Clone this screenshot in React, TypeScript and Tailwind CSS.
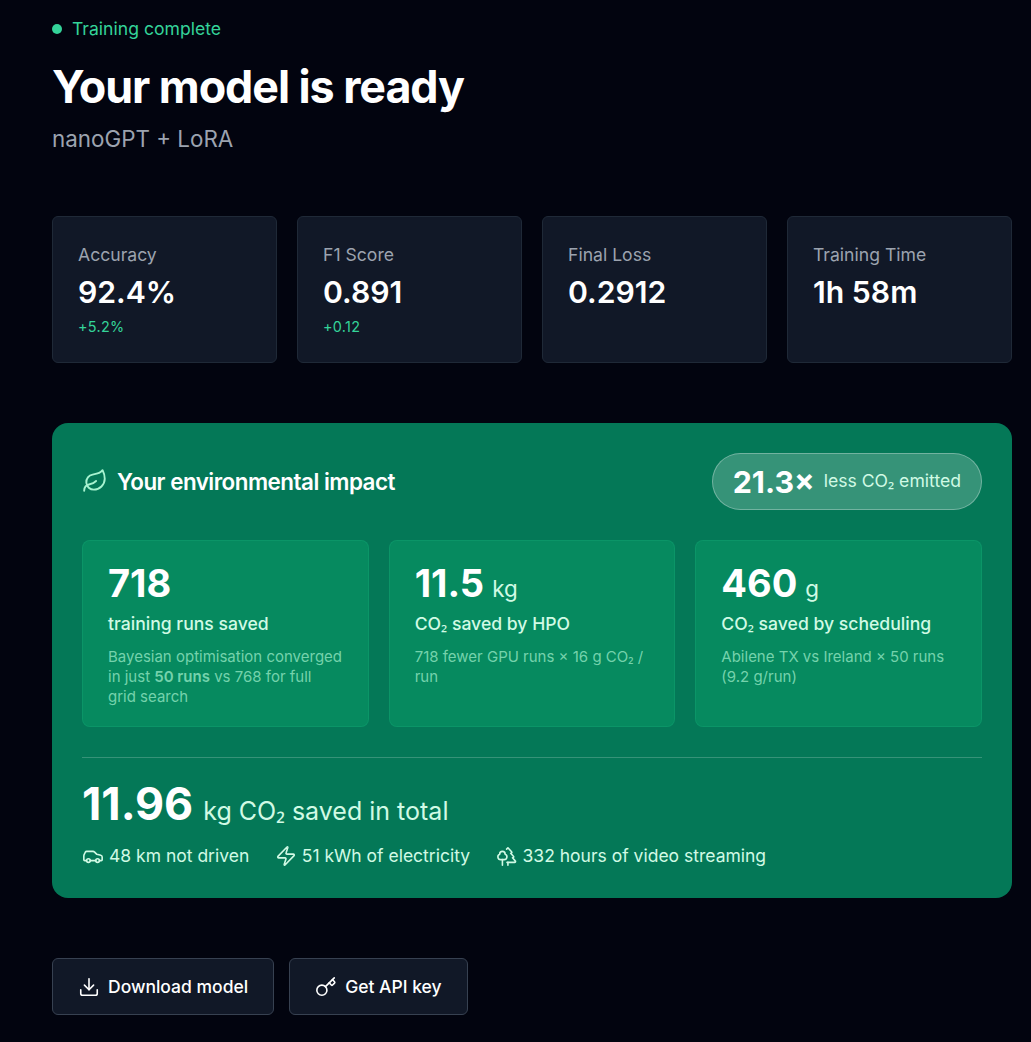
import { Car, Download, Key, Leaf, Trees, Zap } from "lucide-react";

const stats = [
  { label: "Accuracy", value: "92.4%", delta: "+5.2%" },
  { label: "F1 Score", value: "0.891", delta: "+0.12" },
  { label: "Final Loss", value: "0.2912", delta: "" },
  { label: "Training Time", value: "1h 58m", delta: "" },
];

const Two = () => <span className="font-['Noto_Sans'] leading-none font-normal">₂</span>;

function StatCard({ label, value, delta }: { label: string; value: string; delta: string }) {
  return (
    <div className="h-[147px] rounded-md border border-[#1f2937] bg-[#111827] px-[25px] pt-[25px]">
      <div className="text-[17.6px] leading-[26px] text-[#9ca3af]">{label}</div>
      <div className="mt-[5px] text-[30.2px] leading-[38px] font-semibold text-white">{value}</div>
      {delta && <div className="mt-[6px] text-[14.4px] leading-[20px] tracking-[0.3px] text-[#34d399]">{delta}</div>}
    </div>
  );
}

function ImpactCard({ value, unit, title, children }: { value: string; unit?: string; title: React.ReactNode; children: React.ReactNode }) {
  return (
    <div className="h-[187px] rounded-lg border border-[#10a070]/50 bg-[#068a5f] px-[25px] pt-[19px]">
      <div className="flex items-baseline gap-[8px] text-white">
        <span className="text-[38px] leading-[46px] font-bold">{value}</span>
        {unit && <span className="text-[22.4px] leading-[30px] text-[#d1fae5]">{unit}</span>}
      </div>
      <div className="mt-[5px] text-[17.6px] leading-[26px] font-[450] text-[#d1fae5]">{title}</div>
      <div className="mt-[10px] text-[15px] leading-[20px] text-[#a7f3d0]/70">{children}</div>
    </div>
  );
}

export default function App() {
  return (
    <div className="h-[1042px] overflow-hidden bg-[#02040f] pl-[52px] pr-[19px] pt-[16px] font-['Inter',sans-serif]">
      <div className="flex items-center gap-[10px] text-[17.6px] leading-[26px] text-[#34d399]">
        <span className="h-[10px] w-[10px] rounded-full bg-[#34d399]" />
        Training complete
      </div>
      <h1 className="mt-[17px] text-[44.8px] leading-[56px] font-bold tracking-[-1.05px] text-white">Your model is ready</h1>
      <div className="mt-[8px] text-[22.4px] leading-[32px] text-[#9ca3af]">nanoGPT + LoRA</div>

      <div className="mt-[61px] grid grid-cols-4 gap-[20px]">
        {stats.map((s) => (
          <StatCard key={s.label} {...s} />
        ))}
      </div>

      <div className="mt-[60px] h-[475px] rounded-2xl bg-[#047857] p-[30px]">
        <div className="flex h-[57px] items-center justify-between">
          <div className="flex items-center gap-[9px]">
            <Leaf size={26} strokeWidth={1.75} className="text-[#a7f3d0]" />
            <span className="pt-[1px] text-[22.4px] font-semibold tracking-[-0.5px] text-white">Your environmental impact</span>
          </div>
          <div className="flex h-[57px] items-center gap-[9px] rounded-full border border-white/30 bg-white/20 px-[20px]">
            <span className="text-[30.4px] leading-[36px] font-bold text-white">21.3×</span>
            <span className="text-[17.6px] text-[#d1fae5]">less CO<Two /> emitted</span>
          </div>
        </div>

        <div className="mt-[30px] grid grid-cols-3 gap-[20px]">
          <ImpactCard value="718" title="training runs saved">
            Bayesian optimisation converged in just <b className="font-semibold">50 runs</b> vs 768 for full grid search
          </ImpactCard>
          <ImpactCard value="11.5" unit="kg" title={<>CO<Two /> saved by HPO</>}>
            718 fewer GPU runs × 16 g CO<Two /> / run
          </ImpactCard>
          <ImpactCard value="460" unit="g" title={<>CO<Two /> saved by scheduling</>}>
            Abilene TX vs Ireland × 50 runs (9.2 g/run)
          </ImpactCard>
        </div>

        <div className="mt-[30px] border-t border-white/20 pt-[16px]">
          <div className="flex items-baseline gap-[10px]">
            <span className="text-[44.8px] leading-[60px] font-bold text-white">11.96</span>
            <span className="text-[25px] leading-[32px] text-[#d1fae5]">kg CO<Two /> saved in total</span>
          </div>
          <div className="mt-[9px] flex gap-[25.5px] text-[17.5px] leading-[26px] text-[#d1fae5]">
            <div className="flex items-center gap-[5px]"><Car size={22} strokeWidth={1.75} />48 km not driven</div>
            <div className="flex items-center gap-[5px]"><Zap size={22} strokeWidth={1.75} />51 kWh of electricity</div>
            <div className="flex items-center gap-[5px]"><Trees size={22} strokeWidth={1.75} />332 hours of video streaming</div>
          </div>
        </div>
      </div>

      <div className="mt-[60px] flex gap-[15px]">
        <button className="flex h-[57px] items-center gap-[8px] rounded-md border border-[#374151] bg-[#111827] px-[25px] pt-[1px] text-[17.5px] font-[450] text-white">
          <Download size={22} strokeWidth={1.75} />Download model
        </button>
        <button className="flex h-[57px] items-center gap-[8px] rounded-md border border-[#374151] bg-[#111827] px-[25px] pt-[1px] text-[17.5px] font-[450] text-white">
          <Key size={22} strokeWidth={1.75} />Get API key
        </button>
      </div>
    </div>
  );
}
